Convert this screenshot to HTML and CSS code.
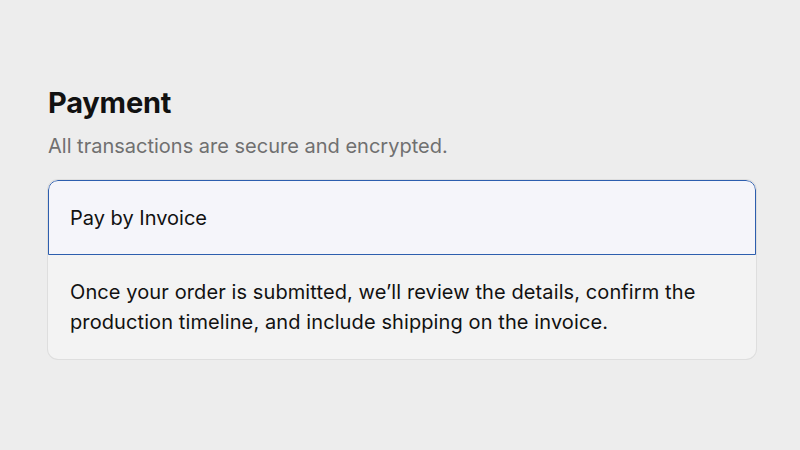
FILE: index.html
```html
<!DOCTYPE html>
<html>
<head>
<meta charset="utf-8">
<link rel="stylesheet" href="styles.css">
</head>
<body>
<main class="page">
  <h1 class="title">Payment</h1>
  <p class="subtitle">All transactions are secure and encrypted.</p>
  <section class="card">
    <div class="card-head">Pay by Invoice</div>
    <div class="card-body">Once your order is submitted, we’ll review the details, confirm the production timeline, and include shipping on the invoice.</div>
  </section>
</main>
</body>
</html>
```

FILE: styles.css
```css
html, body {
  margin: 0;
  padding: 0;
  background: #ededed;
  width: 800px;
  height: 450px;
  overflow: hidden;
}
.page {
  padding: 83px 44px 0 48px;
  font-family: Inter, "Noto Sans", sans-serif;
  color: #111;
}
.title {
  margin: 0;
  font-size: 29px;
  font-weight: 700;
  line-height: 40px;
  letter-spacing: -0.2px;
}
.subtitle {
  margin: 9px 0 0;
  font-size: 20px;
  line-height: 28px;
  color: #707070;
}
.card {
  margin-top: 20px;
  border-radius: 10px;
  background: #f3f3f3;
  box-shadow: 0 0 0 1px #dedede;
  overflow: hidden;
}
.card-head {
  background: #f5f5fa;
  border: 1.5px solid #2d5eae;
  border-radius: 10px 10px 0 0;
  height: 75px;
  box-sizing: border-box;
  display: flex;
  align-items: center;
  padding-left: 21px;
  font-size: 20px;
}
.card-body {
  padding: 22px 22px 22px 22px;
  font-size: 20px;
  line-height: 30px;
  letter-spacing: 0.1px;
}
```
